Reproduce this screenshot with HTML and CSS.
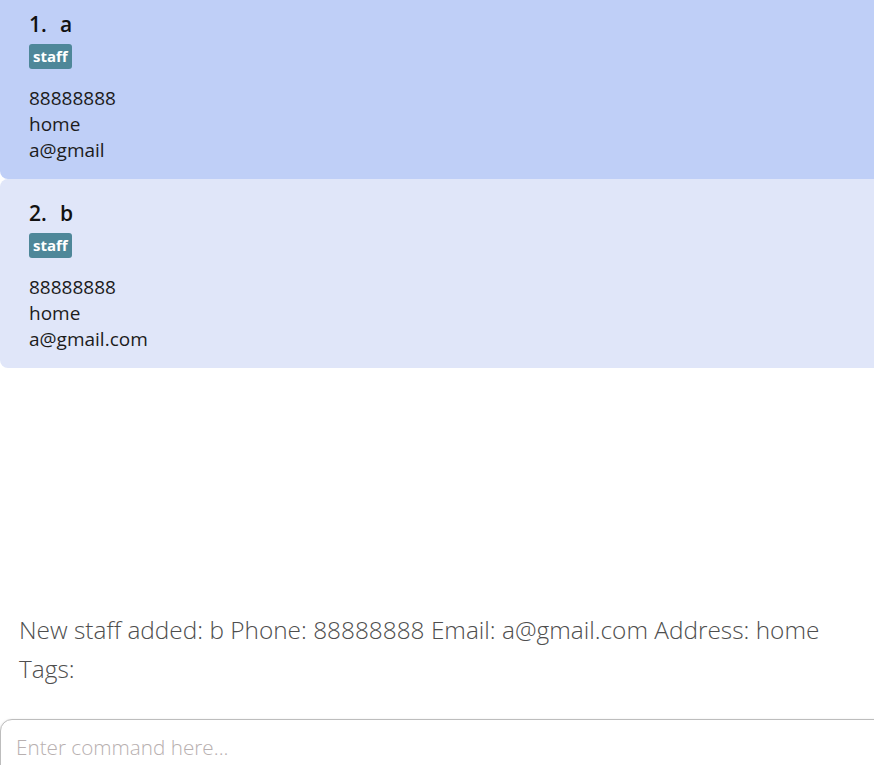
FILE: index.html
```html
<!DOCTYPE html>
<html lang="en">
<head>
<meta charset="utf-8">
<title>Staff list</title>
<link rel="stylesheet" href="styles.css">
</head>
<body>
<div class="app">
  <div class="list-pane">
    <div class="list">
      <div class="card card-selected">
        <div class="title"><span class="index">1.</span><span class="name">a</span></div>
        <div class="tags"><span class="tag">staff</span></div>
        <div class="field">88888888</div>
        <div class="field">home</div>
        <div class="field">a@gmail</div>
      </div>
      <div class="card card-odd">
        <div class="title"><span class="index">2.</span><span class="name">b</span></div>
        <div class="tags"><span class="tag">staff</span></div>
        <div class="field">88888888</div>
        <div class="field">home</div>
        <div class="field">a@gmail.com</div>
      </div>
    </div>
  </div>
  <div class="result">New staff added: b Phone: 88888888 Email: a@gmail.com Address: home Tags: </div>
  <div class="command">
    <input class="command-input" type="text" placeholder="Enter command here...">
  </div>
</div>
</body>
</html>
```
FILE: styles.css
```css
html, body {
  margin: 0;
  padding: 0;
  background: #ffffff;
}
.app {
  height: 765px;
  display: flex;
  flex-direction: column;
  overflow: hidden;
  font-family: "Open Sans", "Noto Sans", sans-serif;
}
.list-pane {
  flex: 1;
  overflow: hidden;
}
.list {
  display: flex;
  flex-direction: column;
  margin-top: -10px;
}
.card {
  box-sizing: border-box;
  height: 189px;
  padding: 20px 0 0 29px;
  border-radius: 8px 0 0 8px;
  color: #1c1c1c;
}
.card-selected {
  background: #bfcff7;
}
.card-odd {
  background: #e0e6f9;
}
.title {
  display: flex;
  font-size: 21px;
  font-weight: 600;
  line-height: 28px;
  color: #111111;
}
.index {
  width: 31px;
}
.tags {
  display: flex;
  margin-top: 6px;
  margin-bottom: 16px;
}
.tag {
  display: inline-block;
  background: #4e8799;
  color: #ffffff;
  font-size: 15px;
  font-weight: 700;
  line-height: 25px;
  height: 25px;
  padding: 0 4px;
  border-radius: 3px;
}
.field {
  font-size: 19px;
  line-height: 26px;
}
.result {
  box-sizing: border-box;
  height: 118px;
  padding: 9px 19px 0 19px;
  font-size: 24.4px;
  font-weight: 300;
  line-height: 39px;
  color: #4e4e4e;
}
.command {
  height: 46px;
}
.command-input {
  box-sizing: border-box;
  width: 900px;
  height: 60px;
  margin: 0;
  border: 1px solid #bdbdbd;
  border-radius: 12px 0 0 0;
  box-shadow: 0 1px 3px rgba(0,0,0,0.18);
  padding: 0 0 4px 15px;
  font-family: "Open Sans", "Noto Sans", sans-serif;
  font-size: 20.7px;
  font-weight: 300;
  color: #333;
  outline: none;
  background: #ffffff;
}
.command-input::placeholder {
  color: #b8b0b0;
}
```
